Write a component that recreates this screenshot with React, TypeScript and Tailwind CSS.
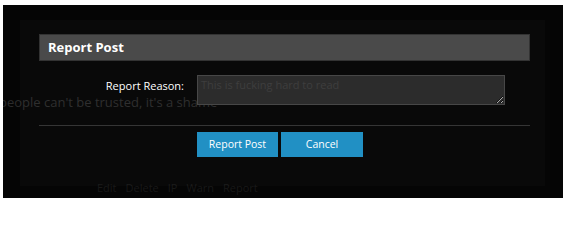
import React from 'react'

const FONT = { fontFamily: '"Open Sans", "Noto Sans", Arial, sans-serif' }

export default function App() {
  return (
    <div className="h-[204px] w-[568px] bg-white pl-[3px] pt-[5px]" style={FONT}>
      <div className="relative h-[193px] w-[560px] overflow-hidden bg-[#050505]">
        {/* page behind the overlay */}
        <div className="-ml-[4px] pt-[88px] text-[13px] leading-[18px] whitespace-nowrap text-[#2b2b2b]">
          people can&apos;t be trusted, it&apos;s a shame
        </div>
        <div className="mt-[69px] flex gap-[9px] pl-[94px] text-[11px] leading-[16px] text-[#181818]">
          <span>Edit</span>
          <span>Delete</span>
          <span>IP</span>
          <span>Warn</span>
          <span>Report</span>
        </div>

        {/* modal */}
        <div className="absolute left-[17px] top-[15px] h-[166px] w-[525px] bg-white/[0.02] pl-[19px] pt-[14px]">
          <div className="h-[27px] w-[491px] border border-[#333] bg-[#4a4a4a] px-[8px] text-[13px] font-bold leading-[25px] text-white">
            Report Post
          </div>

          <div className="mt-[14px] flex items-start gap-[13px]">
            <label className="w-[145px] pt-[3px] text-right text-[11px] leading-[15px] text-white">
              Report Reason:
            </label>
            <textarea
              defaultValue="This is fucking hard to read"
              className="h-[30px] w-[308px] border border-[#474747] bg-[#2c2c2c] px-[3px] py-[2px] text-[11px] leading-[14px] text-[#3e3e3e] outline-none"
              style={FONT}
            />
          </div>

          <div className="mt-[20px] h-px w-[491px] bg-[#353535]" />

          <div className="mt-[6px] flex gap-[3px] pl-[158px]">
            <button className="h-[25px] w-[81px] bg-[#2190c4] text-[10.5px] text-white">Report Post</button>
            <button className="h-[25px] w-[82px] bg-[#2190c4] text-[10.5px] text-white">Cancel</button>
          </div>
        </div>
      </div>
    </div>
  )
}
